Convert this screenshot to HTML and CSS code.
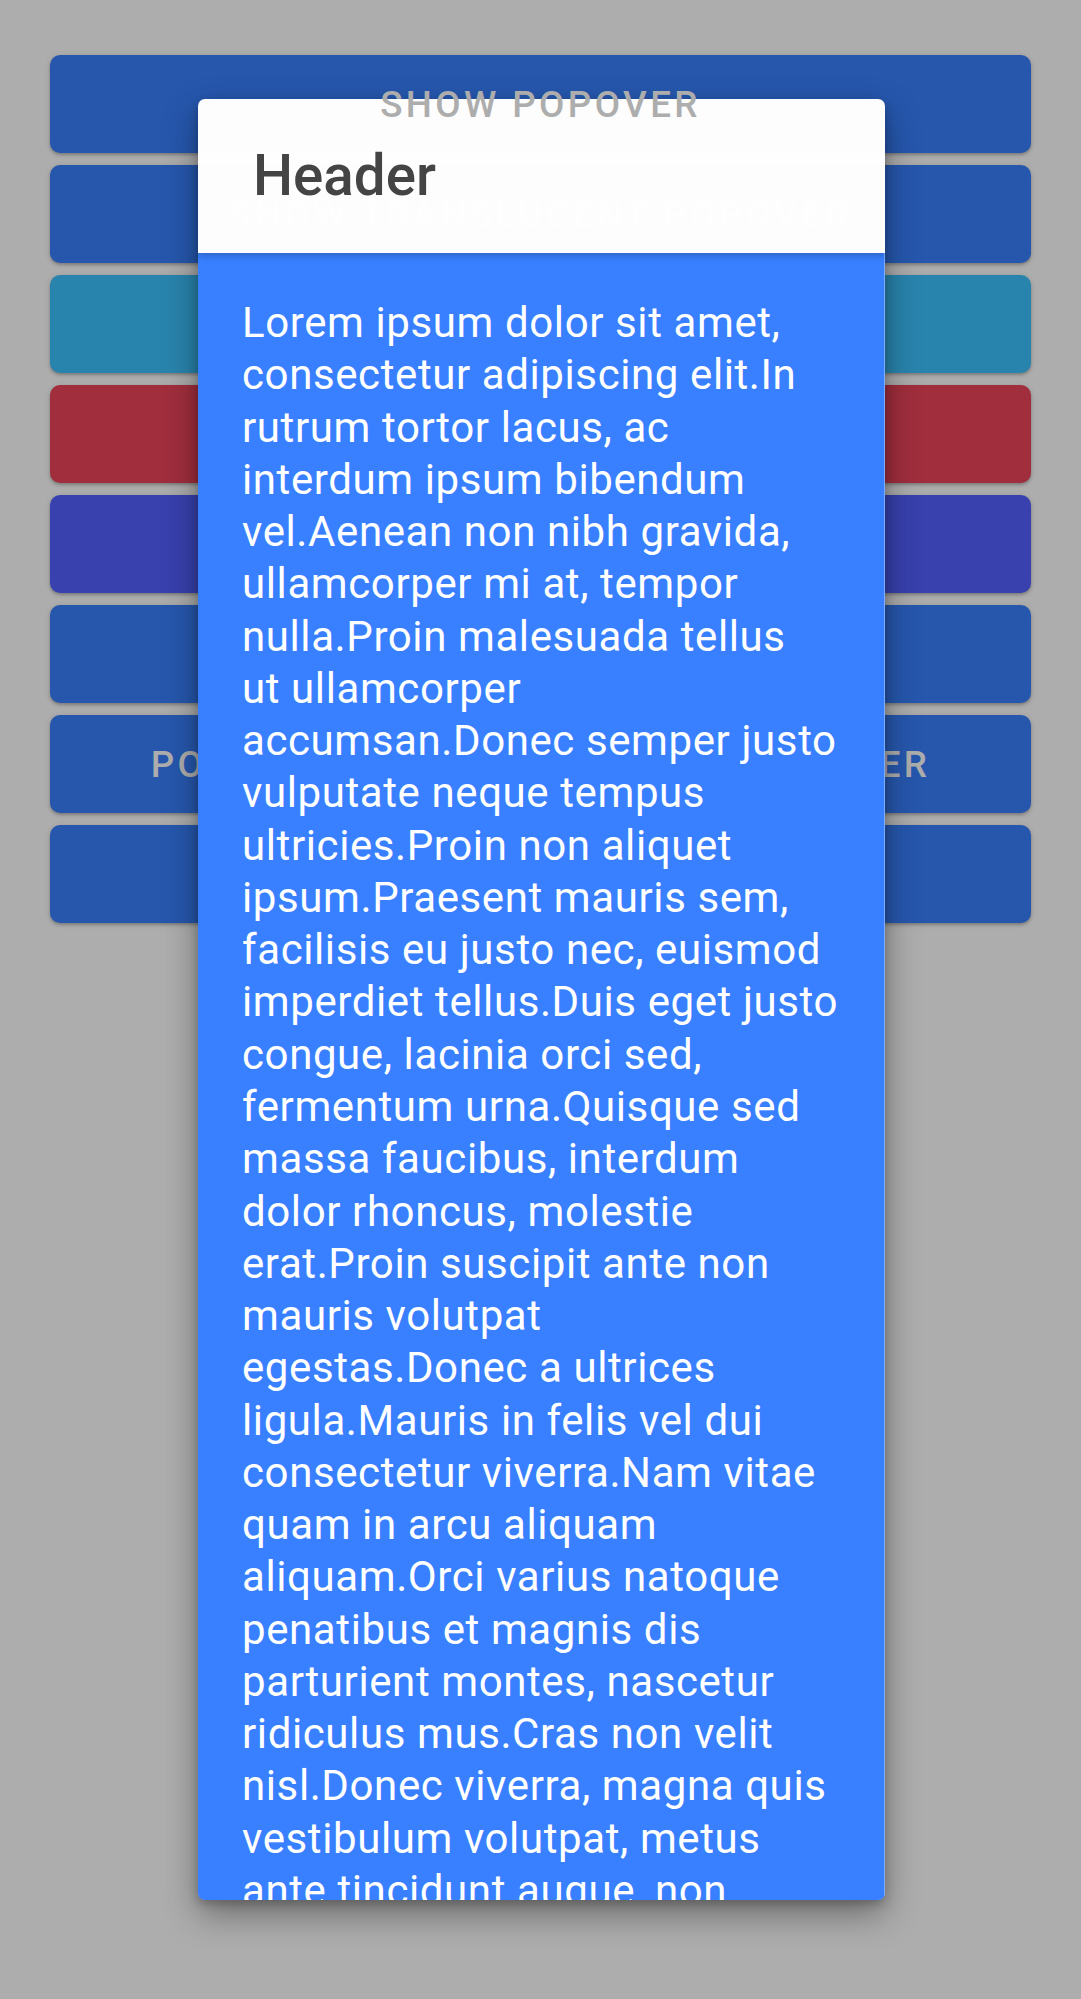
FILE: index.html
```html
<!DOCTYPE html>
<html lang="en">
<head>
<meta charset="utf-8">
<title>Popover</title>
<link rel="stylesheet" href="styles.css">
</head>
<body>
<div class="page">
  <div class="buttons">
    <div class="btn primary"><span class="label label-top">Show Popover</span></div>
    <div class="btn primary"><span class="label">Show Translucent Popover</span></div>
    <div class="btn secondary"><span class="label">Long List Popover</span></div>
    <div class="btn danger"><span class="label">No Event Popover</span></div>
    <div class="btn tertiary"><span class="label">Custom Class Popover</span></div>
    <div class="btn primary"><span class="label">Header Popover</span></div>
    <div class="btn primary"><span class="label">Popover With Translucent Header</span></div>
    <div class="btn primary"><span class="label">Scroll Popover</span></div>
  </div>

  <div class="popover">
    <div class="pop-header">Header</div>
    <div class="pop-body">
      <p class="pop-text">Lorem ipsum dolor sit amet,<br>
consectetur adipiscing elit.In<br>
rutrum tortor lacus, ac<br>
interdum ipsum bibendum<br>
vel.Aenean non nibh gravida,<br>
ullamcorper mi at, tempor<br>
nulla.Proin malesuada tellus<br>
ut ullamcorper<br>
accumsan.Donec semper justo<br>
vulputate neque tempus<br>
ultricies.Proin non aliquet<br>
ipsum.Praesent mauris sem,<br>
facilisis eu justo nec, euismod<br>
imperdiet tellus.Duis eget justo<br>
congue, lacinia orci sed,<br>
fermentum urna.Quisque sed<br>
massa faucibus, interdum<br>
dolor rhoncus, molestie<br>
erat.Proin suscipit ante non<br>
mauris volutpat<br>
egestas.Donec a ultrices<br>
ligula.Mauris in felis vel dui<br>
consectetur viverra.Nam vitae<br>
quam in arcu aliquam<br>
aliquam.Orci varius natoque<br>
penatibus et magnis dis<br>
parturient montes, nascetur<br>
ridiculus mus.Cras non velit<br>
nisl.Donec viverra, magna quis<br>
vestibulum volutpat, metus<br>
ante tincidunt augue, non<br>
ultricies nisl nunc at leo.Sed vel<br>
mauris et orci lacinia ullamcorper.</p>
    </div>
  </div>
</div>
</body>
</html>
```
FILE: styles.css
```css
html, body {
  margin: 0;
  padding: 0;
  background: #adadad;
}

body {
  font-family: Roboto, "Noto Sans", "Liberation Sans", sans-serif;
  width: 1081px;
  height: 1999px;
  overflow: hidden;
}

.page {
  position: relative;
  height: 1999px;
}

.buttons {
  display: flex;
  flex-direction: column;
  gap: 12px;
  padding: 55px 50px 0 50px;
}

.btn {
  height: 98px;
  border-radius: 10px;
  display: flex;
  align-items: center;
  justify-content: center;
  box-shadow: 0 2px 3px rgba(0, 0, 0, 0.22), 0 1px 6px rgba(0, 0, 0, 0.10);
}

.primary { background: #2657ad; }
.secondary { background: #2984ad; }
.danger { background: #a02e3d; }
.tertiary { background: #3841ad; }

.label {
  font-size: 36.75px;
  font-weight: 500;
  letter-spacing: 3.4px;
  text-transform: uppercase;
  color: #adadad;
  white-space: nowrap;
}

.label-top {
  position: relative;
  z-index: 3;
}

.popover {
  position: absolute;
  left: 198px;
  top: 99px;
  width: 687px;
  height: 1801px;
  z-index: 2;
  border-radius: 7px;
  overflow: hidden;
  display: flex;
  flex-direction: column;
  box-shadow: 0 14px 34px rgba(0, 0, 0, 0.38), 0 4px 10px rgba(0, 0, 0, 0.2);
}

.pop-header {
  position: relative;
  z-index: 1;
  flex: 0 0 154px;
  display: flex;
  align-items: center;
  padding-left: 55px;
  background: rgba(254, 254, 254, 0.996);
  color: #444444;
  font-size: 56.5px;
  font-weight: 500;
  box-shadow: 0 3px 7px rgba(0, 0, 0, 0.22);
}

.pop-body {
  flex: 1 1 auto;
  background: #3880ff;
  padding: 44px 42px 0 44px;
  overflow: hidden;
  border-right: 1px solid rgba(255, 255, 255, 0.35);
}

.pop-text {
  margin: 0;
  color: #ffffff;
  font-size: 42px;
  font-weight: 400;
  letter-spacing: 0.6px;
  line-height: 52.26px;
  white-space: nowrap;
}
```
